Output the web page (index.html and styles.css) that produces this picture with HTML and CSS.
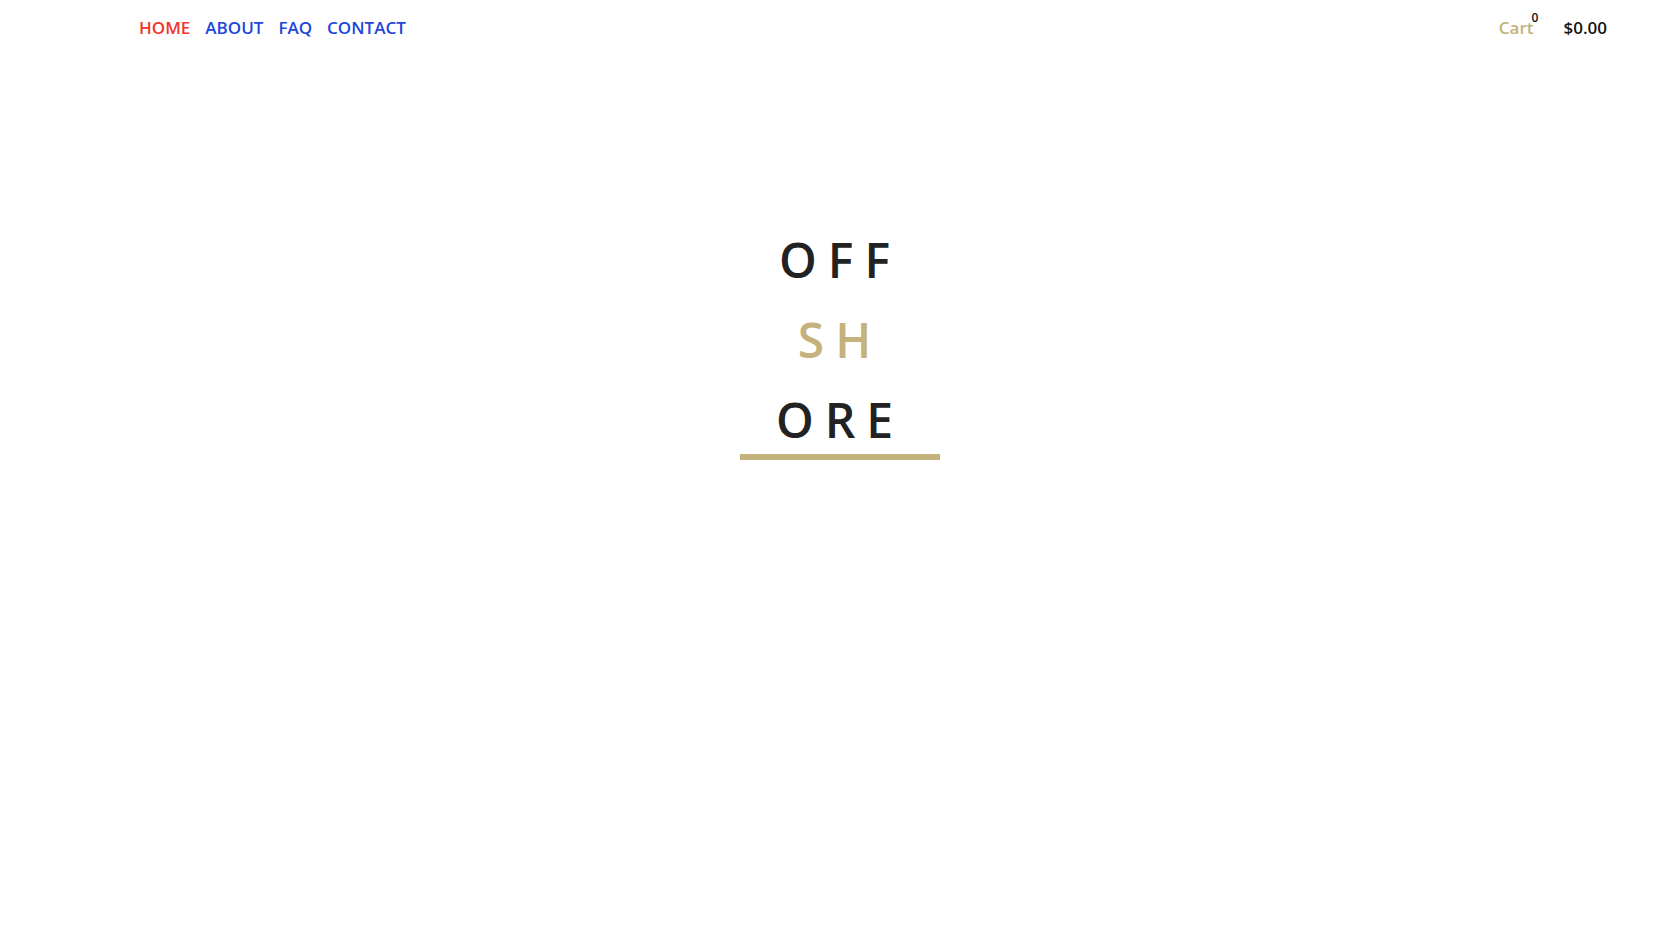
FILE: index.html
```html
<!DOCTYPE html>
<html lang="en">
<head>
<meta charset="utf-8">
<title>Offshore</title>
<link rel="stylesheet" href="styles.css">
</head>
<body>
<header class="site-header">
  <nav class="main-nav">
    <a class="nav-link nav-link--active" href="#">HOME</a>
    <a class="nav-link" href="#">ABOUT</a>
    <a class="nav-link" href="#">FAQ</a>
    <a class="nav-link" href="#">CONTACT</a>
  </nav>
  <div class="cart">
    <a class="cart-link" href="#">Cart<sup class="cart-count">0</sup></a>
    <span class="cart-total">$0.00</span>
  </div>
</header>
<main class="hero">
  <div class="logo">
    <div class="logo-line">OFF</div>
    <div class="logo-line logo-line--gold">SH</div>
    <div class="logo-line">ORE</div>
    <div class="logo-bar"></div>
  </div>
</main>
</body>
</html>
```

FILE: styles.css
```css
html, body {
  margin: 0;
  padding: 0;
  background: #ffffff;
}

body {
  font-family: "Open Sans", "Liberation Sans", sans-serif;
  width: 1680px;
  height: 947px;
  overflow: hidden;
}

.site-header {
  display: flex;
  justify-content: space-between;
  align-items: flex-start;
  padding: 18px 73px 0 139px;
  height: 42px;
}

.main-nav {
  display: flex;
  gap: 15px;
}

.nav-link {
  font-size: 17px;
  line-height: 20px;
  font-weight: 600;
  color: #2146d8;
  text-decoration: none;
}

.nav-link--active {
  color: #f2352b;
}

.cart {
  display: flex;
  gap: 30px;
  font-size: 17px;
  line-height: 20px;
  font-weight: 600;
}

.cart-link {
  color: #c4b27c;
  text-decoration: none;
  position: relative;
}

.cart-count {
  position: absolute;
  top: -6px;
  right: -5px;
  font-size: 12px;
  line-height: 12px;
  color: #111111;
  font-weight: 600;
}

.cart-total {
  color: #151515;
}

.hero {
  display: flex;
  justify-content: center;
  padding-top: 160px;
}

.logo {
  display: flex;
  flex-direction: column;
  align-items: center;
  width: 200px;
}

.logo-line {
  font-size: 48px;
  line-height: 80px;
  font-weight: 600;
  letter-spacing: 11px;
  color: #222222;
}

.logo-line--gold {
  color: #c4b27c;
}

.logo-bar {
  width: 200px;
  height: 6px;
  background: #c4b27c;
  margin-top: -6px;
}
```
